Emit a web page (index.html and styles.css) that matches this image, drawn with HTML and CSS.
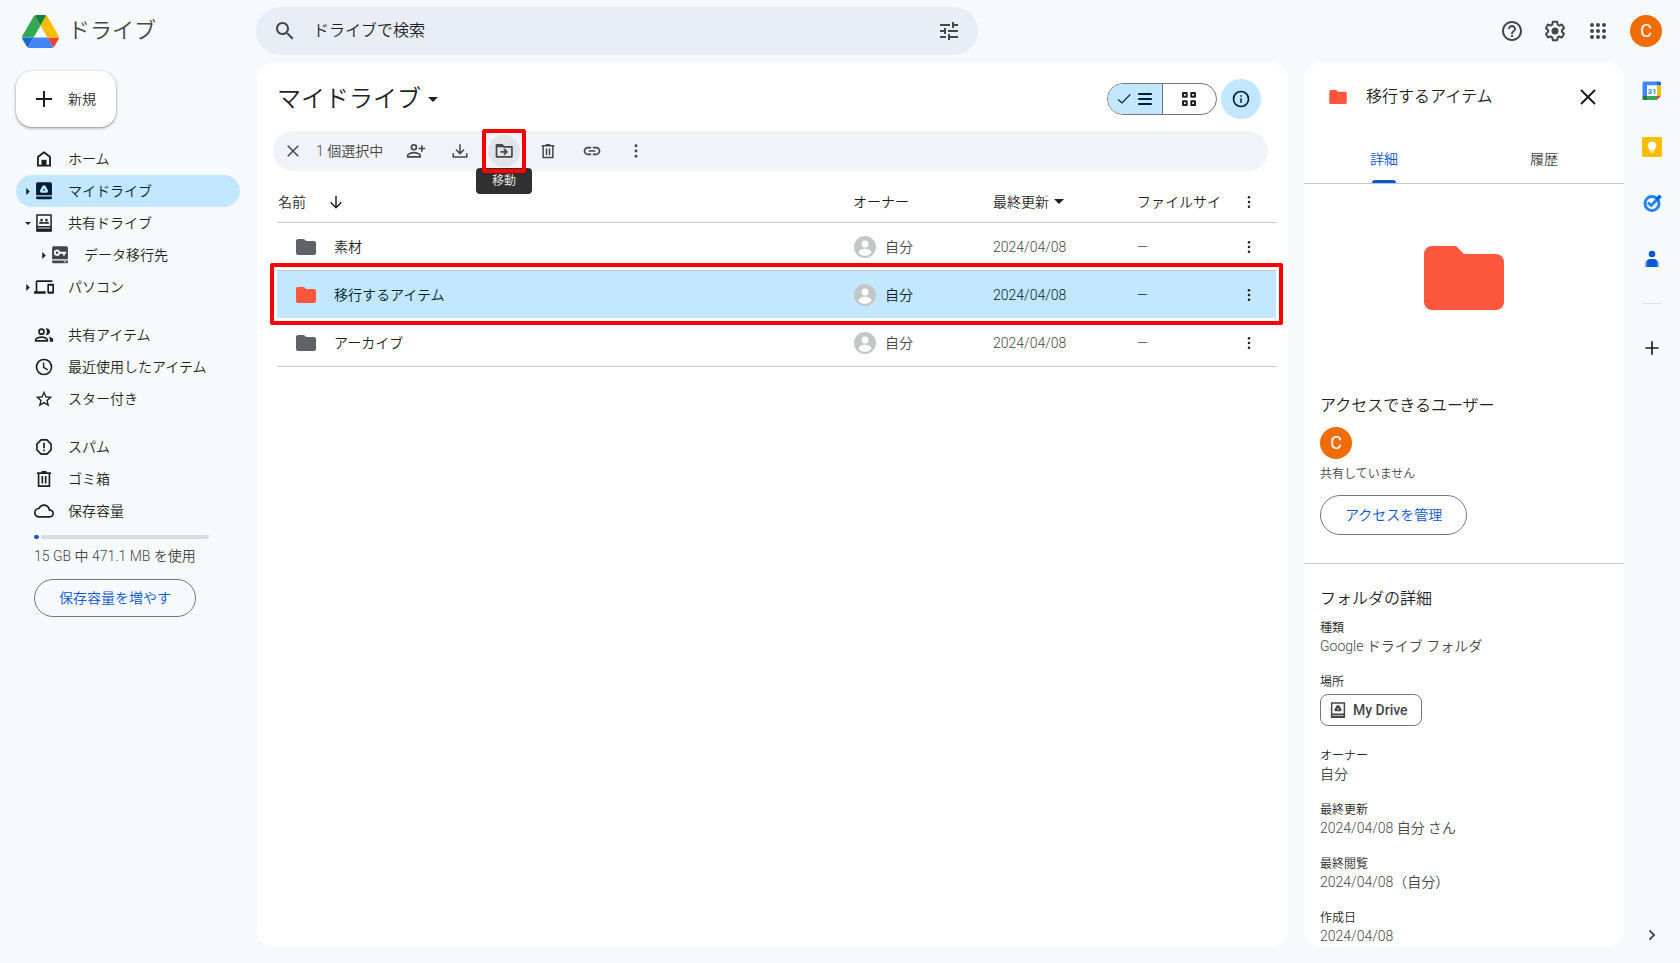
FILE: index.html
```html
<!DOCTYPE html>
<html lang="ja">
<head>
<meta charset="utf-8">
<title>マイドライブ</title>
<link rel="stylesheet" href="styles.css">
</head>
<body>
<svg class="sprite" aria-hidden="true">
  <symbol id="i-search" viewBox="0 0 24 24"><path d="M15.5 14h-.79l-.28-.27C15.41 12.59 16 11.11 16 9.5 16 5.91 13.09 3 9.5 3S3 5.91 3 9.5 5.91 16 9.5 16c1.61 0 3.09-.59 4.23-1.57l.27.28v.79l5 4.99L20.49 19l-4.99-5zm-6 0C7.01 14 5 11.99 5 9.5S7.01 5 9.5 5 14 7.01 14 9.5 11.99 14 9.5 14z"/></symbol>
  <symbol id="i-tune" viewBox="0 0 24 24"><path d="M3 17v2h6v-2H3zM3 5v2h10V5H3zm10 16v-2h8v-2h-8v-2h-2v6h2zM7 9v2H3v2h4v2h2V9H7zm14 4v-2H11v2h10zm-6-4h2V7h4V5h-4V3h-2v6z"/></symbol>
  <symbol id="i-help" viewBox="0 0 24 24"><path d="M11 18h2v-2h-2v2zm1-16C6.48 2 2 6.48 2 12s4.48 10 10 10 10-4.48 10-10S17.52 2 12 2zm0 18c-4.41 0-8-3.59-8-8s3.59-8 8-8 8 3.59 8 8-3.59 8-8 8zm0-14c-2.21 0-4 1.79-4 4h2c0-1.1.9-2 2-2s2 .9 2 2c0 2-3 1.75-3 5h2c0-2.25 3-2.5 3-5 0-2.21-1.79-4-4-4z"/></symbol>
  <symbol id="i-gear" viewBox="0 0 24 24"><path d="M13.85 22.25h-3.7c-.74 0-1.36-.54-1.45-1.27l-.27-1.89c-.27-.14-.53-.29-.79-.46l-1.8.72c-.7.26-1.47-.03-1.81-.65L2.2 15.53c-.35-.66-.2-1.44.36-1.88l1.53-1.19c-.01-.15-.02-.3-.02-.46 0-.15.01-.31.02-.46l-1.52-1.19c-.59-.45-.74-1.26-.37-1.88l1.85-3.19c.34-.62 1.11-.9 1.79-.63l1.81.73c.26-.17.52-.32.78-.46l.27-1.91c.09-.7.71-1.25 1.44-1.25h3.7c.74 0 1.36.54 1.45 1.27l.27 1.89c.27.14.53.29.79.46l1.8-.72c.71-.26 1.48.03 1.82.65l1.84 3.18c.36.66.2 1.44-.36 1.88l-1.52 1.19c.01.15.02.3.02.46s-.01.31-.02.46l1.52 1.19c.56.45.72 1.23.37 1.86l-1.86 3.22c-.34.62-1.11.9-1.8.63l-1.8-.72c-.26.17-.52.32-.78.46l-.27 1.91c-.1.68-.72 1.22-1.46 1.22zm-3.23-2h2.76l.37-2.55.53-.22c.44-.18.88-.44 1.34-.78l.45-.34 2.38.96 1.38-2.4-2.03-1.58.07-.56c.03-.26.06-.51.06-.78s-.03-.53-.06-.78l-.07-.56 2.03-1.58-1.39-2.4-2.39.96-.45-.35c-.42-.32-.87-.58-1.33-.77l-.52-.22-.37-2.55h-2.76l-.37 2.55-.53.21c-.44.19-.88.44-1.34.79l-.45.33-2.38-.95-1.39 2.39 2.03 1.58-.07.56a7 7 0 0 0-.06.79c0 .26.02.53.06.78l.07.56-2.03 1.58 1.38 2.4 2.39-.96.45.35c.43.33.86.58 1.33.77l.53.22.38 2.55z"/><circle cx="12" cy="12" r="3.5"/></symbol>
  <symbol id="i-apps" viewBox="0 0 24 24"><circle cx="6" cy="6" r="2"/><circle cx="12" cy="6" r="2"/><circle cx="18" cy="6" r="2"/><circle cx="6" cy="12" r="2"/><circle cx="12" cy="12" r="2"/><circle cx="18" cy="12" r="2"/><circle cx="6" cy="18" r="2"/><circle cx="12" cy="18" r="2"/><circle cx="18" cy="18" r="2"/></symbol>
  <symbol id="i-plus" viewBox="0 0 24 24"><path d="M20 13h-7v7h-2v-7H4v-2h7V4h2v7h7z"/></symbol>
  <symbol id="i-home" viewBox="0 0 24 24"><path d="M4.700 9.500 12 4l7.300 5.500V20H4.700z" fill="none" stroke="currentColor" stroke-width="2.200" stroke-linejoin="round"/><path d="M9 13h6v7H9z"/></symbol>
  <symbol id="i-mydrive" viewBox="0 0 24 24"><path fill-rule="evenodd" d="M4.500 1.500h15A2 2 0 0 1 21.500 3.500V17h-19V3.500a2 2 0 0 1 2-2zM10.500 5.500 7 11.700l1.200 2.300h7.600l1.200-2.300-3.500-6.200zM12 9l1.500 2.500h-3z"/><path d="M2.500 18.600h19v1.400a2 2 0 0 1-2 2h-15a2 2 0 0 1-2-2z"/></symbol>
  <symbol id="i-mydrive-line" viewBox="0 0 24 24"><path fill="none" stroke="currentColor" stroke-width="2" d="M3.500 2.500h17v19h-17zM3.500 17.500h17"/><path d="M3 19.500h18V22H3z"/><path fill-rule="evenodd" d="M10.500 5.500 7 11.700l1.200 2.100h7.600l1.200-2.100-3.500-6.200zM12 9l1.300 2.300h-2.600z"/></symbol>
  <symbol id="i-shared" viewBox="0 0 24 24"><path fill="none" stroke="currentColor" stroke-width="1.800" stroke-linejoin="round" d="M3.500 2.500h17v19h-17zM3.500 16.500h17"/><path d="M3 18.500h18V22H3z"/><circle cx="9" cy="8.300" r="1.500"/><circle cx="15" cy="8.300" r="1.500"/><path d="M6 13v-.8c0-1.100 1.700-1.700 3-1.700s3 .6 3 1.700c0-1.100 1.700-1.700 3-1.700s3 .6 3 1.700v.8z"/></symbol>
  <symbol id="i-keydrive" viewBox="0 0 24 24"><path fill-rule="evenodd" d="M4.500 1.500h15A2 2 0 0 1 21.500 3.500V17h-19V3.500a2 2 0 0 1 2-2zM8.500 5.500a3.800 3.800 0 1 0 3.600 5h3.400v2.200h2.400v-2.200h1.600V8.200h-7.400A3.800 3.800 0 0 0 8.500 5.500zm0 2.200a1.600 1.600 0 1 1 0 3.200 1.600 1.600 0 0 1 0-3.200z"/><path fill-rule="evenodd" d="M2.500 18.500h19V20a2 2 0 0 1-2 2h-15a2 2 0 0 1-2-2zM16.500 19.500v1.300H19v-1.300z"/></symbol>
  <symbol id="i-devices" viewBox="0 0 24 24"><path d="M4 6h18V4H4c-1.100 0-2 .9-2 2v11H0v3h14v-3H4V6zm19 2h-6c-.55 0-1 .45-1 1v10c0 .55.450 1 1 1h6c.55 0 1-.45 1-1V9c0-.55-.45-1-1-1zm-1 9.500h-4v-7h4v7z"/></symbol>
  <symbol id="i-people" viewBox="0 0 24 24"><g fill="none" stroke="currentColor" stroke-width="2"><circle cx="9" cy="8" r="3"/><path d="M2 19v-1.200C2 15.500 6.500 14.500 9 14.500s7 1 7 3.300V19z"/></g><path d="M14 4.200a4 4 0 1 1 0 7.600c1-1.200 1.500-2.400 1.500-3.800S15 5.400 14 4.200zM17.500 13.700c2.700.5 5.500 1.800 5.500 4V20h-4v-2.500c0-1.500-.6-2.800-1.500-3.800z"/></symbol>
  <symbol id="i-clock" viewBox="0 0 24 24"><g fill="none" stroke="currentColor" stroke-width="2"><circle cx="12" cy="12" r="9"/><path d="M11.500 6.500v6l5 3" stroke-width="1.700"/></g></symbol>
  <symbol id="i-star" viewBox="0 0 24 24"><path d="M22 9.240l-7.190-.62L12 2 9.190 8.630 2 9.240l5.460 4.730L5.820 21 12 17.270 18.180 21l-1.630-7.030L22 9.240zM12 15.400l-3.760 2.270 1-4.280-3.320-2.880 4.380-.38L12 6.100l1.710 4.040 4.380.38-3.320 2.880 1 4.280L12 15.400z"/></symbol>
  <symbol id="i-spam" viewBox="0 0 24 24"><path fill="none" stroke="currentColor" stroke-width="2" stroke-linejoin="round" d="M8.500 3.500h7l5 5v7l-5 5h-7l-5-5v-7z"/><path d="M11 7h2v6.500h-2zM11 15h2v2h-2z"/></symbol>
  <symbol id="i-trash" viewBox="0 0 24 24"><path fill="none" stroke="currentColor" stroke-width="2" d="M3.500 5h17M9 3.500h6M5.500 5v15.500h13V5M10 8.500v9M14 8.500v9"/></symbol>
  <symbol id="i-cloud" viewBox="0 0 24 24"><path d="M19.350 10.040C18.670 6.590 15.640 4 12 4 9.110 4 6.600 5.640 5.350 8.040 2.340 8.360 0 10.910 0 14c0 3.310 2.690 6 6 6h13c2.760 0 5-2.240 5-5 0-2.640-2.050-4.780-4.650-4.960zM19 18H6c-2.210 0-4-1.790-4-4 0-2.050 1.530-3.760 3.560-3.970l1.070-.11.5-.95C8.080 7.140 9.940 6 12 6c2.620 0 4.880 1.860 5.390 4.430l.3 1.500 1.530.11c1.560.1 2.780 1.410 2.780 2.960 0 1.650-1.350 3-3 3z"/></symbol>
  <symbol id="i-close" viewBox="0 0 24 24"><path fill="none" stroke="currentColor" stroke-width="2" d="M5 5l14 14M19 5 5 19"/></symbol>
  <symbol id="i-addperson" viewBox="0 0 24 24"><g fill="none" stroke="currentColor" stroke-width="2"><circle cx="9.500" cy="7.500" r="3"/><path d="M2 19v-1.500c0-2.300 4.500-3.500 7.500-3.500s7.500 1.200 7.500 3.500V19zM19 5v8M15 9h8"/></g></symbol>
  <symbol id="i-download" viewBox="0 0 24 24"><path fill="none" stroke="currentColor" stroke-width="2" d="M12 3v12M6.500 10l5.500 5.500 5.500-5.500M3 15v5h18v-5"/></symbol>
  <symbol id="i-move" viewBox="0 0 24 24"><path fill="none" stroke="currentColor" stroke-width="2" stroke-linejoin="round" d="M3 5h7l2 2h9.500v12H3zM8 13h7M12 9.500l3.500 3.500-3.500 3.500"/><path d="M3 4h7l2 3.500H3z"/></symbol>
  <symbol id="i-link" viewBox="0 0 24 24"><path d="M3.900 12c0-1.710 1.390-3.100 3.100-3.100h4V7H7c-2.760 0-5 2.240-5 5s2.240 5 5 5h4v-1.900H7c-1.710 0-3.100-1.390-3.100-3.100zM8 13h8v-2H8v2zm9-6h-4v1.900h4c1.710 0 3.100 1.390 3.100 3.100s-1.390 3.100-3.100 3.100h-4V17h4c2.760 0 5-2.240 5-5s-2.240-5-5-5z"/></symbol>
  <symbol id="i-more" viewBox="0 0 24 24"><circle cx="12" cy="5" r="1.900"/><circle cx="12" cy="12" r="1.900"/><circle cx="12" cy="19" r="1.900"/></symbol>
  <symbol id="i-check" viewBox="0 0 24 24"><path fill="none" stroke="currentColor" stroke-width="1.800" d="M3 12.500l6 5.500L21.500 5"/></symbol>
  <symbol id="i-list" viewBox="0 0 24 24"><path d="M3 4h18v2.600H3zM3 10.700h18v2.600H3zM3 17.400h18V20H3z"/></symbol>
  <symbol id="i-grid" viewBox="0 0 24 24"><path fill="none" stroke="currentColor" stroke-width="2.600" stroke-linejoin="round" d="M4 4h5v5H4zM15 4h5v5h-5zM4 15h5v5H4zM15 15h5v5h-5z"/></symbol>
  <symbol id="i-info" viewBox="0 0 24 24"><circle cx="12" cy="12" r="10" fill="none" stroke="currentColor" stroke-width="2.200"/><path d="M11 11h2v6h-2zM11 7h2v2h-2z"/></symbol>
  <symbol id="i-down" viewBox="0 0 24 24"><path fill="none" stroke="currentColor" stroke-width="2.200" d="M12 3v17M4 12.500l8 8 8-8"/></symbol>
  <symbol id="i-caret" viewBox="0 0 10 5"><path d="M0 0h10L5 5z"/></symbol>
  <symbol id="i-caret-right" viewBox="0 0 4 8"><path d="M0 0l4 4-4 4z"/></symbol>
  <symbol id="i-folder" viewBox="0 0 20 16"><path d="M2 0h6l2 2h8a2 2 0 0 1 2 2v10a2 2 0 0 1-2 2H2a2 2 0 0 1-2-2V2a2 2 0 0 1 2-2z"/></symbol>
  <symbol id="i-user" viewBox="0 0 22 22"><circle cx="11" cy="11" r="11" fill="#c4c7c9"/><circle cx="11" cy="8" r="3.500" fill="#fff"/><path d="M4.500 16.500c0-2.500 4-3.800 6.500-3.800s6.500 1.300 6.500 3.800a8 8 0 0 1-13 0z" fill="#fff"/></symbol>
  <symbol id="i-next" viewBox="0 0 24 24"><path fill="none" stroke="currentColor" stroke-width="2.200" d="M9 6.500l5.500 5.500L9 17.500"/></symbol>
</svg>

<header class="topbar">
  <a class="brand" href="#">
    <svg class="brand-logo" viewBox="0 0 87.300 78"><path fill="#1967d2" d="m6.600 66.850 3.850 6.650c.8 1.400 1.950 2.500 3.300 3.300l13.750-23.800h-27.500c0 1.550.4 3.100 1.200 4.500z"/><path fill="#34a853" d="m43.650 25-13.750-23.800c-1.350.8-2.500 1.900-3.300 3.300l-25.400 44a9.060 9.060 0 0 0-1.200 4.500h27.500z"/><path fill="#ea4335" d="m73.550 76.800c1.350-.8 2.500-1.900 3.300-3.300l1.600-2.750 7.650-13.250c.8-1.400 1.200-2.950 1.200-4.500h-27.500z"/><path fill="#188038" d="m43.650 25 13.750-23.800c-1.350-.8-2.900-1.200-4.500-1.200h-18.500c-1.600 0-3.150.45-4.500 1.200z"/><path fill="#4285f4" d="m59.800 53h-32.300l-13.750 23.800c1.350.8 2.900 1.200 4.500 1.200h50.800c1.600 0 3.150-.45 4.500-1.200z"/><path fill="#fbbc04" d="m73.400 26.500-12.700-22c-.8-1.400-1.950-2.500-3.300-3.300l-13.750 23.800 16.150 28h27.450c0-1.550-.4-3.100-1.200-4.500z"/></svg>
    <span>ドライブ</span>
  </a>
  <form class="search">
    <button class="icon-btn" type="button" aria-label="検索"><svg class="ic24"><use href="#i-search"/></svg></button>
    <input class="search-input" type="text" placeholder="ドライブで検索" aria-label="ドライブで検索">
    <button class="icon-btn" type="button" aria-label="検索オプション"><svg class="ic24"><use href="#i-tune"/></svg></button>
  </form>
  <div class="top-actions">
    <button class="icon-btn" aria-label="サポート"><svg class="ic24"><use href="#i-help"/></svg></button>
    <button class="icon-btn" aria-label="設定"><svg class="ic24"><use href="#i-gear"/></svg></button>
    <button class="icon-btn" aria-label="アプリ"><svg class="ic24"><use href="#i-apps"/></svg></button>
    <button class="avatar" aria-label="アカウント">C</button>
  </div>
</header>

<div class="layout">
  <nav class="sidebar">
    <button class="new-btn"><svg class="ic24"><use href="#i-plus"/></svg><span>新規</span></button>
    <ul class="nav-group">
      <li><a class="nav-item" href="#"><span class="twist"></span><svg class="ic20"><use href="#i-home"/></svg><span>ホーム</span></a></li>
      <li><a class="nav-item active" href="#"><span class="twist"><svg class="caret-right"><use href="#i-caret-right"/></svg></span><svg class="ic20"><use href="#i-mydrive"/></svg><span>マイドライブ</span></a></li>
      <li><a class="nav-item" href="#"><span class="twist"><svg class="caret-small"><use href="#i-caret"/></svg></span><svg class="ic20"><use href="#i-shared"/></svg><span>共有ドライブ</span></a></li>
      <li><a class="nav-item child" href="#"><span class="twist"><svg class="caret-right"><use href="#i-caret-right"/></svg></span><svg class="ic20"><use href="#i-keydrive"/></svg><span>データ移行先</span></a></li>
      <li><a class="nav-item" href="#"><span class="twist"><svg class="caret-right"><use href="#i-caret-right"/></svg></span><svg class="ic20"><use href="#i-devices"/></svg><span>パソコン</span></a></li>
    </ul>
    <ul class="nav-group">
      <li><a class="nav-item" href="#"><span class="twist"></span><svg class="ic20"><use href="#i-people"/></svg><span>共有アイテム</span></a></li>
      <li><a class="nav-item" href="#"><span class="twist"></span><svg class="ic20"><use href="#i-clock"/></svg><span>最近使用したアイテム</span></a></li>
      <li><a class="nav-item" href="#"><span class="twist"></span><svg class="ic20"><use href="#i-star"/></svg><span>スター付き</span></a></li>
    </ul>
    <ul class="nav-group">
      <li><a class="nav-item" href="#"><span class="twist"></span><svg class="ic20"><use href="#i-spam"/></svg><span>スパム</span></a></li>
      <li><a class="nav-item" href="#"><span class="twist"></span><svg class="ic20"><use href="#i-trash"/></svg><span>ゴミ箱</span></a></li>
      <li><a class="nav-item" href="#"><span class="twist"></span><svg class="ic20"><use href="#i-cloud"/></svg><span>保存容量</span></a></li>
    </ul>
    <div class="storage">
      <div class="storage-bar"><span class="storage-used" style="width:3%"></span><span class="storage-free"></span></div>
      <p class="storage-text">15 GB 中 471.1 MB を使用</p>
      <button class="outline-btn">保存容量を増やす</button>
    </div>
  </nav>

  <main class="panel main">
    <div class="main-head">
      <h1 class="crumb"><button class="crumb-btn">マイドライブ<svg class="caret"><use href="#i-caret"/></svg></button></h1>
      <div class="view-toggle">
        <button class="view on" aria-label="リスト表示"><svg class="ic16"><use href="#i-check"/></svg><svg class="ic18"><use href="#i-list"/></svg></button>
        <button class="view" aria-label="グリッド表示"><svg class="ic18"><use href="#i-grid"/></svg></button>
      </div>
      <button class="info-btn" aria-label="詳細を表示"><svg class="ic18"><use href="#i-info"/></svg></button>
    </div>

    <div class="toolbar">
      <button class="tool" aria-label="選択を解除"><svg class="ic18"><use href="#i-close"/></svg></button>
      <span class="count">1 個選択中</span>
      <button class="tool" aria-label="共有"><svg class="ic20"><use href="#i-addperson"/></svg></button>
      <button class="tool" aria-label="ダウンロード"><svg class="ic18"><use href="#i-download"/></svg></button>
      <div class="tool-marked">
        <button class="tool hover" aria-label="移動"><svg class="ic20"><use href="#i-move"/></svg></button>
        <span class="tooltip" role="tooltip">移動</span>
        <span class="mark"></span>
      </div>
      <button class="tool" aria-label="削除"><svg class="ic18"><use href="#i-trash"/></svg></button>
      <button class="tool" aria-label="リンクをコピー"><svg class="ic20"><use href="#i-link"/></svg></button>
      <button class="tool" aria-label="その他"><svg class="ic18"><use href="#i-more"/></svg></button>
    </div>

    <table class="files">
      <colgroup><col><col class="c-owner"><col class="c-date"><col class="c-size"><col class="c-more"></colgroup>
      <thead>
        <tr>
          <th><button class="sort">名前<svg class="ic16 arrow"><use href="#i-down"/></svg></button></th>
          <th>オーナー</th>
          <th><button class="sort tight">最終更新<svg class="caret"><use href="#i-caret"/></svg></button></th>
          <th>ファイルサイ</th>
          <th class="more"><button class="row-more" aria-label="その他"><svg class="ic16"><use href="#i-more"/></svg></button></th>
        </tr>
      </thead>
      <tbody>
        <tr>
          <td><span class="file"><svg class="folder"><use href="#i-folder"/></svg>素材</span></td>
          <td><span class="owner"><svg class="ic22"><use href="#i-user"/></svg>自分</span></td>
          <td>2024/04/08</td><td>—</td>
          <td class="more"><button class="row-more" aria-label="その他"><svg class="ic16"><use href="#i-more"/></svg></button></td>
        </tr>
        <tr class="selected">
          <td><span class="row-mark"></span><span class="file"><svg class="folder red"><use href="#i-folder"/></svg>移行するアイテム</span></td>
          <td><span class="owner"><svg class="ic22"><use href="#i-user"/></svg>自分</span></td>
          <td>2024/04/08</td><td>—</td>
          <td class="more"><button class="row-more" aria-label="その他"><svg class="ic16"><use href="#i-more"/></svg></button></td>
        </tr>
        <tr>
          <td><span class="file"><svg class="folder"><use href="#i-folder"/></svg>アーカイブ</span></td>
          <td><span class="owner"><svg class="ic22"><use href="#i-user"/></svg>自分</span></td>
          <td>2024/04/08</td><td>—</td>
          <td class="more"><button class="row-more" aria-label="その他"><svg class="ic16"><use href="#i-more"/></svg></button></td>
        </tr>
      </tbody>
    </table>
  </main>

  <aside class="panel details">
    <div class="details-head">
      <svg class="folder-sm red"><use href="#i-folder"/></svg>
      <h2 class="details-title">移行するアイテム</h2>
      <button class="icon-btn dark" aria-label="閉じる"><svg class="ic24"><use href="#i-close"/></svg></button>
    </div>
    <div class="tabs" role="tablist">
      <button class="tab on" role="tab" aria-selected="true"><span>詳細</span></button>
      <button class="tab" role="tab" aria-selected="false"><span>履歴</span></button>
    </div>
    <div class="preview"><svg class="folder-lg red" viewBox="0 0 80 64"><path d="M8 0h24l8 8h32a8 8 0 0 1 8 8v40a8 8 0 0 1-8 8H8a8 8 0 0 1-8-8V8a8 8 0 0 1 8-8z"/></svg></div>
    <section class="access">
      <h3 class="section-title">アクセスできるユーザー</h3>
      <span class="avatar">C</span>
      <p class="access-note">共有していません</p>
      <button class="outline-btn tall">アクセスを管理</button>
    </section>
    <section class="meta">
      <h3 class="section-title">フォルダの詳細</h3>
      <dl class="facts">
        <div class="fact"><dt>種類</dt><dd>Google ドライブ フォルダ</dd></div>
        <div class="fact"><dt>場所</dt><dd><button class="chip"><svg class="ic18"><use href="#i-mydrive-line"/></svg>My Drive</button></dd></div>
        <div class="fact"><dt>オーナー</dt><dd>自分</dd></div>
        <div class="fact"><dt>最終更新</dt><dd>2024/04/08 自分 さん</dd></div>
        <div class="fact"><dt>最終閲覧</dt><dd>2024/04/08（自分）</dd></div>
        <div class="fact"><dt>作成日</dt><dd>2024/04/08</dd></div>
      </dl>
    </section>
  </aside>

  <aside class="rail">
    <button class="rail-btn" aria-label="カレンダー"><svg class="ic20" viewBox="0 0 20 20"><path fill="#4285f4" d="M2 .5h13v4H5V15H.5V2A1.500 1.500 0 0 1 2 .5z"/><path fill="#1967d2" d="M15 .5h2.500A1.500 1.500 0 0 1 19 2v2.500h-4z"/><path fill="#fbbc04" d="M15 4.500h4V15h-4z"/><path fill="#34a853" d="M5 15h10v4H5z"/><path fill="#188038" d="M.5 15H5v4H2a1.500 1.500 0 0 1-1.500-1.500z"/><path fill="#ea4335" d="M15 15h4l-4 4z"/><path fill="#fff" d="M5 4.500h10V15H5z"/><text class="cal-day" x="10" y="12.500">31</text></svg></button>
    <button class="rail-btn" aria-label="Keep"><svg class="ic20" viewBox="0 0 20 20"><rect width="20" height="20" rx="1.500" fill="#fbbc04"/><path fill="#fff" d="M10 4.500a4.300 4.300 0 0 0-2.500 7.800v1.200h5v-1.200A4.300 4.300 0 0 0 10 4.500zM7.800 14.500h4.400v1H7.800z"/></svg></button>
    <button class="rail-btn" aria-label="ToDo"><svg class="ic20" viewBox="0 0 20 20"><circle cx="10" cy="10.500" r="7" fill="none" stroke="#2684fc" stroke-width="3"/><path fill="none" stroke="#2684fc" stroke-width="3" d="M6 9.500l3.200 3L16 5.500"/><path fill="none" stroke="#0066da" stroke-width="3.500" d="M14.500 7l4-4.200"/></svg></button>
    <button class="rail-btn" aria-label="連絡先"><svg class="ic20" viewBox="0 0 20 20"><circle cx="10" cy="5" r="3.300" fill="#0b57d0"/><path fill="#669df6" d="M3 18v-3a5 5 0 0 1 5-5h4a5 5 0 0 1 5 5v3z"/><path fill="#0b57d0" d="M5 18v-4.500A3.500 3.500 0 0 1 8.500 10h3a3.500 3.500 0 0 1 3.500 3.500V18z"/></svg></button>
    <hr class="rail-line">
    <button class="rail-btn" aria-label="アドオンを取得"><svg class="ic20"><use href="#i-plus"/></svg></button>
    <button class="rail-btn last" aria-label="サイドパネルを非表示"><svg class="ic20"><use href="#i-next"/></svg></button>
  </aside>
</div>
</body>
</html>
```
FILE: styles.css
```css
* { box-sizing: border-box; margin: 0; padding: 0; }

body {
  display: flex;
  flex-direction: column;
  height: 100vh;
  overflow: hidden;
  background: #f7fafd;
  color: #1f1f1f;
  font: 350 14px/20px Roboto, "Noto Sans CJK JP", sans-serif;
}

button { border: 0; background: none; color: inherit; font: inherit; cursor: pointer; }
a { color: inherit; text-decoration: none; }
ul { list-style: none; }
svg { display: block; flex: none; fill: currentColor; }
h1, h2, h3 { font-weight: 350; }

.sprite { position: absolute; width: 0; height: 0; }
.ic16 { width: 16px; height: 16px; }
.ic18 { width: 18px; height: 18px; }
.ic20 { width: 20px; height: 20px; }
.ic22 { width: 22px; height: 22px; }
.ic24 { width: 24px; height: 24px; }
.caret { width: 10px; height: 5px; }
.red { color: #fc573d; }

/* Top bar */
.topbar {
  display: flex;
  align-items: center;
  flex: none;
  height: 63px;
  padding: 0 18px 1px 22px;
}
.brand {
  display: flex;
  align-items: center;
  gap: 9px;
  width: 234px;
  color: #444746;
  font-size: 22px;
  line-height: 32px;
}
.brand-logo { width: 37px; height: 33px; }
.search {
  display: flex;
  align-items: center;
  flex: 0 1 722px;
  height: 48px;
  padding: 0 9px;
  border-radius: 24px;
  background: #e9edf6;
}
.search-input {
  flex: 1;
  min-width: 0;
  margin-left: 8px;
  border: 0;
  background: none;
  outline: 0;
  font: inherit;
  font-size: 16px;
}
.search-input::placeholder { color: #1f1f1f; opacity: 1; }
.icon-btn {
  display: grid;
  place-items: center;
  width: 40px;
  height: 40px;
  color: #444746;
}
.icon-btn.dark { color: #1f1f1f; }
.top-actions { display: flex; align-items: center; gap: 3px; margin-left: auto; }
.avatar {
  display: grid;
  place-items: center;
  width: 32px;
  height: 32px;
  border-radius: 50%;
  background: #ef6c00;
  color: #fff;
  font: 400 18px/32px Roboto, sans-serif;
}
.top-actions .avatar { margin-left: 9px; }

/* Columns */
.layout { display: flex; flex: 1; min-height: 0; padding-bottom: 16px; }
.panel { border-radius: 16px; background: #fff; }

/* Sidebar */
.sidebar { flex: none; width: 257px; padding: 8px 17px 0 16px; }
.new-btn {
  display: flex;
  align-items: center;
  gap: 12px;
  height: 56px;
  margin-bottom: 16px;
  padding: 0 20px 0 16px;
  border-radius: 16px;
  background: #fff;
  box-shadow: 0 1px 2px rgba(60, 64, 67, .4), 0 1px 3px 1px rgba(60, 64, 67, .18);
}
.nav-group { margin-bottom: 16px; }
.nav-item {
  display: flex;
  align-items: center;
  height: 32px;
  border-radius: 16px;
}
.nav-item .ic20 { margin-right: 14px; }
.nav-item.active { background: #c2e7ff; color: #001d35; }
.nav-item.child { padding-left: 16px; }
.nav-item.child .ic20 { color: #444746; }
.twist { display: flex; justify-content: center; width: 18px; padding-left: 6px; }
.caret-right { width: 4px; height: 7px; }
.caret-small { width: 6px; height: 3px; }
.storage { padding: 0 14px 0 18px; }
.storage-bar { display: flex; gap: 2px; width: 175px; height: 4px; margin: -8px 0 7px; }
.storage-used { flex: none; border-radius: 2px; background: #0b57d0; }
.storage-free { flex: 1; border-radius: 2px; background: #dadce0; }
.storage-text { margin-bottom: 13px; color: #444746; white-space: nowrap; }
.outline-btn {
  height: 38px;
  padding: 0 24px;
  border: 1px solid #747775;
  border-radius: 20px;
  color: #0b57d0;
}
.outline-btn.tall { height: 40px; }

/* File list */
.main { flex: 1; min-width: 0; padding: 16px 12px 0 16px; }
.main-head { display: flex; align-items: center; height: 40px; padding: 0 15px 0 4px; }
.crumb { flex: 1; font-size: 24px; line-height: 32px; }
.crumb-btn { display: flex; align-items: center; gap: 7px; }
.view-toggle {
  display: flex;
  width: 110px;
  height: 32px;
  margin-right: 4px;
  overflow: hidden;
  border: 1px solid #747775;
  border-radius: 16px;
}
.view { display: flex; flex: 1; align-items: center; justify-content: center; gap: 4px; }
.view.on { border-right: 1px solid #747775; background: #c2e7ff; color: #001d35; }
.info-btn {
  display: grid;
  place-items: center;
  width: 40px;
  height: 40px;
  border-radius: 50%;
  background: #c2e7ff;
  color: #001d35;
}
.toolbar {
  display: flex;
  align-items: center;
  gap: 12px;
  height: 40px;
  margin: 12px 8px 0 0;
  padding: 0 4px;
  border-radius: 20px;
  background: #f0f3f8;
  color: #444746;
}
.tool { display: grid; place-items: center; width: 32px; height: 32px; border-radius: 50%; }
.tool.hover { background: #e1e4e8; }
.count { width: 66px; margin: 0 6px 0 -5px; white-space: nowrap; }
.tool-marked { position: relative; }
.mark {
  position: absolute;
  inset: -6px;
  border: 4px solid #f00;
  border-radius: 2px;
}
.tooltip {
  position: absolute;
  top: 33px;
  left: -12px;
  width: 56px;
  height: 26px;
  border-radius: 4px;
  background: #303030;
  color: #f2f2f2;
  font-size: 12px;
  line-height: 26px;
  text-align: center;
}
.files {
  width: 100%;
  padding: 0 0 0 4px;
  margin-top: 10px;
  border-spacing: 0;
  table-layout: fixed;
}
.c-owner { width: 140px; }
.c-date { width: 144px; }
.c-size { width: 85px; }
.c-more { width: 54px; }
.files th {
  height: 42px;
  border-bottom: 1px solid #c7c7c7;
  font-weight: 350;
  text-align: left;
  white-space: nowrap;
}
.files td { height: 48px; border-bottom: 1px solid #c7c7c7; color: #444746; }
.files td:first-child { color: #1f1f1f; }
.files .selected td { border-bottom-color: #fff; background: #c2e7ff; background-clip: padding-box; color: #001d35; }
.files th:first-child { padding-left: 1px; }
.sort { display: flex; align-items: center; gap: 22px; }
.sort.tight { gap: 5px; }
.file { display: flex; align-items: center; gap: 18px; padding-left: 19px; }
.folder { width: 20px; height: 16px; color: #5f6368; }
.folder.red { color: #fc573d; }
.owner { display: flex; align-items: center; gap: 9px; padding-left: 1px; }
.row-more { display: grid; place-items: center; width: 100%; height: 32px; color: #1f1f1f; }
.selected { position: relative; }
.row-mark {
  position: absolute;
  inset: -8px -7px -6px;
  border: 4px solid #f00;
  border-radius: 2px;
  pointer-events: none;
}

/* Details */
.details { flex: none; width: 320px; margin-left: 16px; overflow: hidden; }
.details-head { display: flex; align-items: center; height: 68px; padding: 0 16px 0 25px; }
.folder-sm { width: 18px; height: 14px; }
.details-title { flex: 1; margin-left: 19px; font-size: 16px; line-height: 24px; }
.tabs { display: flex; height: 53px; border-bottom: 1px solid #c4c7c5; }
.tab { flex: 1; padding-top: 3px; color: #444746; }
.tab.on { position: relative; color: #0b57d0; }
.tab.on::after {
  position: absolute;
  bottom: 0;
  left: 50%;
  width: 24px;
  height: 3px;
  margin-left: -12px;
  border-radius: 3px 3px 0 0;
  background: #0b57d0;
  content: "";
}
.preview { display: grid; place-items: center; height: 188px; }
.folder-lg { width: 80px; height: 64px; }
.section-title { font-size: 16px; line-height: 24px; }
.access { padding: 22px 16px 28px; border-bottom: 1px solid #c4c7c5; }
.access .avatar { margin: 9px 0 7px; }
.access-note { margin-bottom: 12px; color: #444746; font-size: 12px; line-height: 17px; }
.meta { padding: 23px 16px 0; }
.facts { display: grid; gap: 18px; margin-top: 9px; }
.fact dt { font-size: 12px; line-height: 16px; }
.fact dd { color: #444746; }
.chip {
  display: flex;
  align-items: center;
  gap: 6px;
  height: 32px;
  margin: 4px 0;
  padding: 0 13px 0 8px;
  border: 1px solid #747775;
  border-radius: 8px;
  font: 500 14px/20px Roboto, sans-serif;
}

/* Side rail */
.rail { display: flex; flex: none; flex-direction: column; align-items: center; width: 56px; padding-top: 8px; }
.rail-btn { display: grid; place-items: center; width: 40px; height: 40px; margin-bottom: 16px; }
.rail-btn.last { margin: auto 0 -8px; color: #444746; }
.rail-line { width: 20px; margin: 8px 0 24px; border: 0; border-top: 1px solid #e0e3e6; }
.cal-day { fill: #4285f4; font: 700 8px Roboto, sans-serif; text-anchor: middle; }
```
